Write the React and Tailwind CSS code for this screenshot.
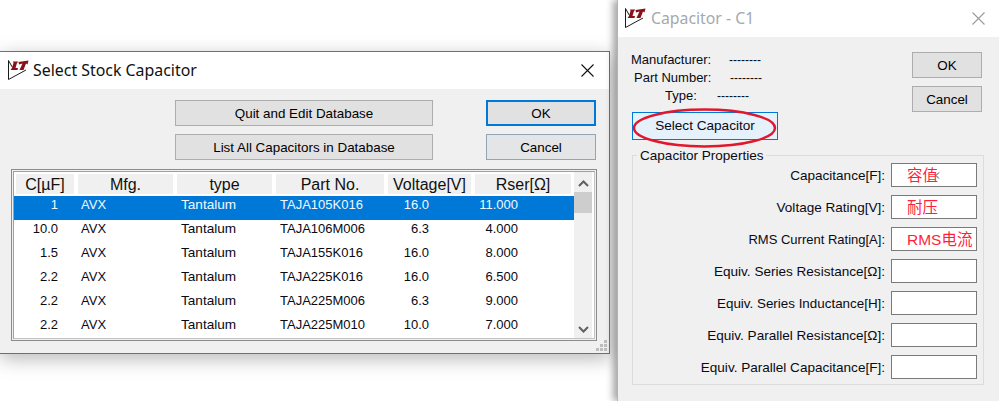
import React from 'react';

const rows = [
  ['1', 'TAJA105K016', '16.0', '11.000'],
  ['10.0', 'TAJA106M006', '6.3', '4.000'],
  ['1.5', 'TAJA155K016', '16.0', '8.000'],
  ['2.2', 'TAJA225K016', '16.0', '6.500'],
  ['2.2', 'TAJA225M006', '6.3', '9.000'],
  ['2.2', 'TAJA225M010', '10.0', '7.000'],
];

const headers = [
  ['C[µF]', 'w-[58px]'],
  ['Mfg.', 'w-[95px]'],
  ['type', 'w-[95px]'],
  ['Part No.', 'w-[108px]'],
  ['Voltage[V]', 'w-[83px]'],
  ['Rser[Ω]', 'w-[96px]'],
];

const props = [
  ['Capacitance[F]:', '容值', 'text-[13.55px]'],
  ['Voltage Rating[V]:', '耐压', 'text-[13.55px]'],
  ['RMS Current Rating[A]:', 'RMS电流', 'text-[13px]'],
  ['Equiv. Series Resistance[Ω]:', '', 'text-[13.55px]'],
  ['Equiv. Series Inductance[H]:', '', 'text-[13.4px]'],
  ['Equiv. Parallel Resistance[Ω]:', '', 'text-[13.55px]'],
  ['Equiv. Parallel Capacitance[F]:', '', 'text-[13.55px]'],
];

function Logo() {
  return (
    <svg width="22" height="21" viewBox="0 0 22 21" className="shrink-0">
      <path d="M4.5 7.5 L0.5 0.5 V19.5 L18 10" fill="none" stroke="#1a1a1a" strokeWidth="1" />
      <path d="M5 1.5 H10.5 L9 3 L7.5 8 H10 L9.5 10 H2.5 L4 8 L5.5 3 Z" fill="#8a1016" />
      <path d="M10.5 2 L20.5 0.5 L19.5 4.5 L18 3.5 L15.5 10 H11.5 L14.5 3.5 L11 4.5 Z" fill="#8a1016" />
    </svg>
  );
}

function Close({ color }) {
  return (
    <svg width="13" height="13" viewBox="0 0 13 13">
      <path d="M0.5 0.5 L12.5 12.5 M12.5 0.5 L0.5 12.5" stroke={color} strokeWidth="1.1" fill="none" />
    </svg>
  );
}

function Btn({ className, children }) {
  return (
    <div className={`flex items-center justify-center h-[26px] pt-[2px] bg-[#e1e1e1] text-[13.4px] text-black ${className}`}>
      {children}
    </div>
  );
}

function Grip() {
  const dots = [[8, 0], [4, 4], [8, 4], [0, 8], [4, 8], [8, 8]];
  return (
    <svg width="11" height="11" viewBox="0 0 11 11" className="absolute right-[2px] bottom-[2px]">
      {dots.map(([x, y]) => (
        <rect key={`${x}-${y}`} x={x} y={y} width="3" height="3" fill="#bdbdbd" />
      ))}
    </svg>
  );
}

function StockDialog() {
  return (
    <div className="absolute left-0 top-[51px] w-[610px] h-[303px] flex flex-col bg-[#f0f0f0] border-y border-r border-[#707070] shadow-[0_5px_18px_rgba(0,0,0,0.28)]">
      <div className="flex items-center h-[37px] bg-white pl-[8px] pr-[15px] shrink-0">
        <Logo />
        <span className="ml-[3px] text-[15.9px] text-[#111] font-['Noto_Sans',sans-serif]">Select Stock Capacitor</span>
        <span className="ml-auto flex"><Close color="#111" /></span>
      </div>

      <div className="flex pl-[175px] pt-[11px]">
        <Btn className="w-[258px] border border-[#adadad]">Quit and Edit Database</Btn>
        <Btn className="w-[110px] ml-[53px] border-2 border-[#0078d7]">OK</Btn>
      </div>
      <div className="flex pl-[175px] pt-[8px]">
        <Btn className="w-[258px] border border-[#adadad]">List All Capacitors in Database</Btn>
        <Btn className="w-[110px] ml-[53px] border border-[#93a5b5] bg-[#e3e5e7]">Cancel</Btn>
      </div>

      <div className="ml-[11px] mt-[9px] w-[586px] h-[172px] border border-[#8c8c8c] p-px">
        <div className="flex h-full bg-white border border-[#a0a0a0] border-b-[#c4c4c4] border-r-[#c4c4c4] pr-[2px]">
          <div className="w-[560px] shrink-0">
            <div className="flex gap-1 pl-[2px] pt-[2px] h-[24px]">
              {headers.map(([label, w]) => (
                <div key={label} className={`${w} h-[20px] pt-px flex items-center justify-center bg-[#f0f0f0] text-[16px] text-[#111]`}>
                  {label}
                </div>
              ))}
            </div>
            {rows.map((r, i) => (
              <div
                key={r[1]}
                className={`flex h-[24px] pt-px text-[13px] leading-[16px] ${i === 0 ? 'bg-[#0078d7] text-[#f2f8fd]' : 'text-[#0a0a14]'}`}
              >
                <span className="w-[44px] text-right">{r[0]}</span>
                <span className="w-[100px] ml-[23px]">AVX</span>
                <span className="w-[99px] text-[13.6px]">Tantalum</span>
                <span className="w-[100px]">{r[1]}</span>
                <span className="w-[49px] text-right">{r[2]}</span>
                <span className="w-[89px] text-right">{r[3]}</span>
              </div>
            ))}
          </div>
          <div className="w-[19px] h-full flex flex-col items-center bg-[#f0f0f0]">
            <svg width="11" height="7" viewBox="0 0 11 7" className="mt-[8px] shrink-0">
              <path d="M1 6 L5.5 1.5 L10 6" fill="none" stroke="#606060" strokeWidth="2" />
            </svg>
            <div className="w-full h-[21px] mt-[5px] bg-[#cdcdcd]" />
            <svg width="11" height="7" viewBox="0 0 11 7" className="mt-auto mb-[5px] shrink-0">
              <path d="M1 1 L5.5 5.5 L10 1" fill="none" stroke="#606060" strokeWidth="2" />
            </svg>
          </div>
        </div>
      </div>
      <Grip />
    </div>
  );
}

function InfoRow({ pad, width, label }) {
  return (
    <div className={`flex items-center h-[18px] pt-px ${pad}`}>
      <span className={width}>{label}</span>
      <span className="text-[12px]">--------</span>
    </div>
  );
}

function CapacitorWindow() {
  return (
    <div className="absolute left-[617px] top-0 w-[382px] h-[401px] flex flex-col bg-[#f0f0f0] border-l border-[#b4b4b4] shadow-[-4px_0_7px_rgba(0,0,0,0.35)]">
      <div className="flex items-center h-[37px] bg-white pl-[7px] pr-[14px] shrink-0">
        <Logo />
        <span className="ml-[4px] text-[15.8px] text-[#a3a9b0] font-['Noto_Sans',sans-serif]">Capacitor - C1</span>
        <span className="ml-auto flex"><Close color="#9a9a9a" /></span>
      </div>

      <div className="flex justify-between pl-[14px] pr-[17px] pt-[13px]">
        <div className="text-[13px] text-[#0a0a14]">
          <InfoRow pad="-ml-px" width="w-[98px]" label="Manufacturer:" />
          <InfoRow pad="pl-[2px]" width="w-[96px]" label="Part Number:" />
          <InfoRow pad="pl-[33px]" width="w-[52px]" label="Type:" />
          <div className="relative mt-[8px] w-[146px] h-[28px] pt-px flex items-center justify-center bg-[#e5f1fb] border border-[#0078d7] text-[13.6px]">
            Select Capacitor
            <svg width="146" height="42" viewBox="0 0 146 42" className="absolute left-[-1px] top-[-6px]">
              <ellipse cx="72.5" cy="21" rx="70.5" ry="18.5" fill="none" stroke="#e0182d" strokeWidth="2.5" />
            </svg>
          </div>
        </div>
        <div className="flex flex-col gap-2 pt-[2px]">
          <Btn className="w-[70px] border border-[#adadad]">OK</Btn>
          <Btn className="w-[70px] border border-[#adadad]">Cancel</Btn>
        </div>
      </div>

      <div className="relative ml-[14px] mt-[15px] w-[352px] h-[230px] border border-[#dcdcdc] pt-[7px] pr-[6px]">
        <span className="absolute left-[4px] top-[-8px] px-[3px] bg-[#f0f0f0] text-[13.55px] leading-[16px] text-[#0a0a14]">Capacitor Properties</span>
        <div className="flex flex-col gap-2">
          {props.map(([label, value, size], i) => (
            <div key={label} className="flex items-center justify-end gap-[6px]">
              <span className={`pt-[2px] text-[#0a0a14] ${size}`}>{label}</span>
              <div className="relative w-[86px] h-[24px] pt-[2px] flex items-center pl-[15px] bg-white border border-[#7a7a7a] text-[15.5px] text-[#ff1f3d] font-['Liberation_Sans','Noto_Sans_CJK_SC',sans-serif]">
                {value}
                {i === 0 && (
                  <svg width="5" height="7" viewBox="0 0 5 7" className="absolute left-[43px] top-[8px]">
                    <path d="M4 0.5 L1 3.5 L4 6.5" fill="none" stroke="#444" strokeWidth="1" />
                  </svg>
                )}
              </div>
            </div>
          ))}
        </div>
      </div>
    </div>
  );
}

export default function App() {
  return (
    <div className="relative w-[999px] h-[401px] overflow-hidden bg-white font-['Liberation_Sans',sans-serif]">
      <StockDialog />
      <CapacitorWindow />
    </div>
  );
}
